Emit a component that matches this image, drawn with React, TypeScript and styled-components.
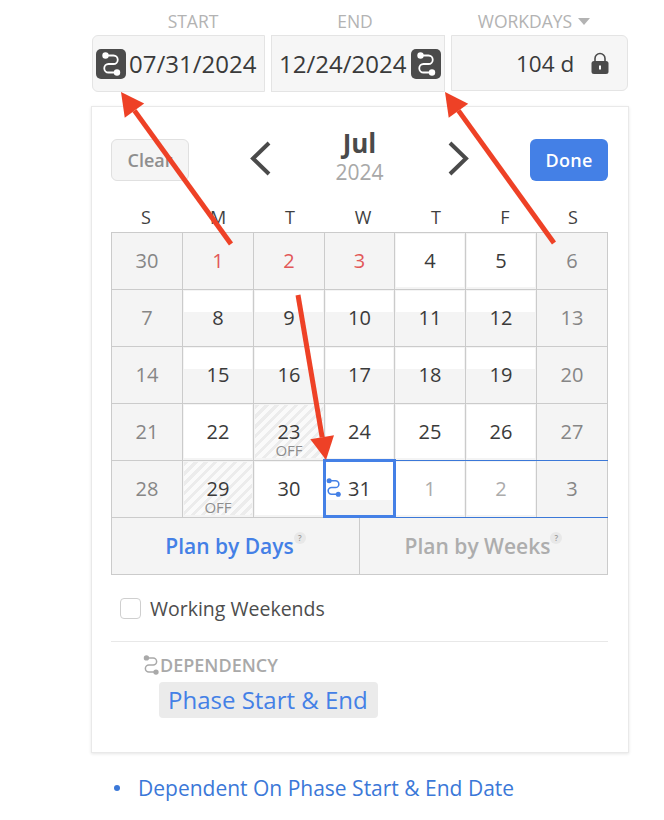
import React from 'react'
import styled, { createGlobalStyle } from 'styled-components'

const GlobalStyle = createGlobalStyle`
  html, body {
    margin: 0;
    padding: 0;
    background: #fff;
    font-family: 'Open Sans', 'Noto Sans', sans-serif;
    color: #3b3b3b;
  }
`

const Page = styled.div`
  position: relative;
  width: 664px;
  height: 820px;
  overflow: hidden;
  box-sizing: border-box;
  padding: 9px 0 0 91px;
`

const FieldLabels = styled.div`
  display: grid;
  grid-template-columns: 174px 180px 178px;
  width: 538px;
  height: 26px;
  align-items: start;
`

const FieldLabel = styled.div<{ $inset?: number }>`
  font-size: 17.5px;
  line-height: 24px;
  color: #b3b3b3;
  padding-left: ${p => p.$inset ?? 0}px;
  display: flex;
  align-items: center;
  justify-content: center;
  gap: 6px;
`

const Caret = styled.span`
  width: 0;
  height: 0;
  border-left: 6px solid transparent;
  border-right: 6px solid transparent;
  border-top: 7px solid #b3b3b3;
`

const Fields = styled.div`
  display: flex;
  gap: 6px;
  padding-left: 1px;
  height: 57px;
`

const Field = styled.div<{ $w: number; $radius: string; $h?: number; $pad?: number; $size?: number }>`
  box-sizing: border-box;
  width: ${p => p.$w}px;
  height: ${p => p.$h ?? 57}px;
  padding-left: ${p => p.$pad ?? 0}px;
  background: #f6f6f6;
  border: 1px solid #e4e4e4;
  border-radius: ${p => p.$radius};
  display: flex;
  align-items: center;
  font-size: ${p => p.$size ?? 24}px;
  color: #3a3a3a;
  white-space: nowrap;
`

const DepBadge = styled.span<{ $end?: boolean }>`
  flex: none;
  width: 30px;
  height: 30px;
  border-radius: 5px;
  background: #4b4b4b;
  display: flex;
  align-items: center;
  justify-content: center;
  margin: ${p => (p.$end ? '0 0 0 5px' : '0 3px 0 3px')};
`

const LockSlot = styled.span`
  display: flex;
  margin-left: 16px;
`

const Panel = styled.div`
  box-sizing: border-box;
  width: 538px;
  height: 647px;
  margin-top: 14px;
  background: #fff;
  border: 1px solid #e9e9e9;
  box-shadow: 0 1px 3px rgba(0, 0, 0, 0.1);
  padding: 32px 20px 0 19px;
`

const PanelHead = styled.div`
  display: flex;
  align-items: flex-start;
  height: 68px;
`

const ClearButton = styled.button`
  box-sizing: border-box;
  width: 78px;
  height: 42px;
  padding: 0;
  border: 1px solid #e0e0e0;
  border-radius: 6px;
  background: #f5f5f5;
  color: #8e8e8e;
  font: 600 18px 'Open Sans', sans-serif;
`

const DoneButton = styled.button`
  box-sizing: border-box;
  width: 78px;
  height: 42px;
  padding: 0;
  border: 0;
  border-radius: 6px;
  background: #4480e6;
  color: #fff;
  font: 600 18px 'Open Sans', sans-serif;
  letter-spacing: 0.3px;
`

const MonthNav = styled.div`
  flex: 1;
  display: flex;
  justify-content: space-between;
  align-items: flex-start;
  padding: 1px 60px 0 60px;
`

const Chevron = styled.svg`
  display: block;
  margin-top: 1px;
`

const MonthTitle = styled.div`
  text-align: center;
  margin-top: -13px;
`

const MonthName = styled.div`
  font-size: 26px;
  line-height: 32px;
  font-weight: 700;
  color: #4a4a4a;
`

const YearName = styled.div`
  font-size: 21px;
  line-height: 27px;
  color: #a8a8a8;
`

const Weekdays = styled.div`
  display: grid;
  grid-template-columns: 70px 74px 70px 76px 70px 68px 68px;
  height: 25px;
`

const Weekday = styled.div`
  text-align: center;
  font-size: 18px;
  line-height: 20px;
  font-weight: 500;
  color: #3f3f3f;
`

const Grid = styled.div`
  position: relative;
  display: grid;
  grid-template-columns: 71px 71px 71px 70px 71px 71px 71px;
  grid-auto-rows: 57px;
  width: 497px;
  box-sizing: border-box;
  border-top: 1px solid #cbcbcb;
  border-left: 1px solid #cbcbcb;
`

type FillKind = 'none' | 'full' | 'band' | 'tall' | 'off'

const fills: Record<FillKind, string> = {
  none: 'none',
  full: 'linear-gradient(#fff, #fff) 1px 1px / calc(100% - 2px) calc(100% - 3px) no-repeat',
  band: 'linear-gradient(#fff, #fff) 1px 1px / calc(100% - 2px) 21px no-repeat',
  tall: 'linear-gradient(#fff, #fff) 1px 1px / calc(100% - 2px) 38px no-repeat',
  off: 'repeating-linear-gradient(135deg, #ececec 0 3px, #fafafa 3px 7px) 1px 1px / calc(100% - 2px) calc(100% - 3px) no-repeat'
}

const Cell = styled.div<{ $fill: FillKind }>`
  box-sizing: border-box;
  position: relative;
  display: flex;
  flex-direction: column;
  align-items: center;
  justify-content: center;
  background: ${p => fills[p.$fill]}, #f4f4f4;
  border-right: 1px solid #cbcbcb;
  border-bottom: 1px solid #cbcbcb;
`

const tones = {
  dark: '#3a3a3a',
  muted: '#868686',
  faint: '#ababab',
  red: '#e25858'
}

const DayNumber = styled.span<{ $tone: keyof typeof tones }>`
  font-size: 20px;
  line-height: 26px;
  color: ${p => tones[p.$tone]};
`

const OffTag = styled.span`
  font-size: 15px;
  line-height: 12px;
  margin-top: -1px;
  margin-bottom: -11px;
  color: #8d8d8d;
`

const SelectedFrame = styled.div`
  position: absolute;
  z-index: 1;
  left: -2px;
  top: -2px;
  right: -2px;
  bottom: -1px;
  border: 3px solid #4480e6;
`

const SelectedIcon = styled.span`
  position: absolute;
  left: -1px;
  top: 17px;
  display: flex;
`

const NextMonthOutline = styled.div`
  position: absolute;
  left: 283px;
  right: 0;
  top: 227px;
  height: 58px;
  box-sizing: border-box;
  border-top: 1px solid #3b78d8;
  border-bottom: 1px solid #3b78d8;
  pointer-events: none;
`

const PlanTabs = styled.div`
  display: grid;
  grid-template-columns: 247px 1fr;
  width: 497px;
  height: 57px;
  box-sizing: border-box;
  border: 1px solid #cbcbcb;
  border-top: 0;
  background: #f4f4f4;
`

const PlanTab = styled.div<{ $active?: boolean }>`
  display: flex;
  align-items: center;
  justify-content: center;
  font-size: 21px;
  font-weight: 600;
  color: ${p => (p.$active ? '#4480e6' : '#adadad')};
  & + & {
    border-left: 1px solid #cbcbcb;
  }
`

const HelpMark = styled.span`
  width: 12px;
  height: 12px;
  border-radius: 50%;
  background: #e8e8e8;
  color: #999;
  font-size: 8px;
  line-height: 12px;
  font-weight: 600;
  text-align: center;
  margin: -16px 0 0 0;
`

const CheckRow = styled.label`
  display: flex;
  align-items: center;
  gap: 9px;
  height: 66px;
  padding: 0 0 0 9px;
  font-size: 19.5px;
  color: #4d4d4d;
`

const CheckBox = styled.span`
  box-sizing: border-box;
  width: 21px;
  height: 21px;
  border: 1px solid #cfcfcf;
  border-radius: 4px;
  background: #fff;
`

const Divider = styled.div`
  width: 497px;
  height: 1px;
  background: #e8e8e8;
`

const DependencySection = styled.div`
  padding: 11px 0 0 30px;
`

const DependencyLabel = styled.div`
  display: flex;
  align-items: center;
  height: 24px;
  font-size: 18px;
  font-weight: 600;
  color: #a9a9a9;
  svg {
    margin-right: -1px;
  }
`

const DependencyChip = styled.span`
  display: inline-block;
  margin: 5px 0 0 18px;
  padding: 0 10px 0 9px;
  height: 36px;
  line-height: 35px;
  border-radius: 4px;
  background: #ebebeb;
  color: #4480e6;
  font-size: 24px;
  white-space: nowrap;
`

const Notes = styled.ul`
  list-style: none;
  margin: 21px 0 0;
  padding: 0 0 0 23px;
  font-size: 21px;
  line-height: 28px;
  color: #3b78d8;
`

const NoteItem = styled.li`
  display: flex;
  align-items: center;
  gap: 18px;
  &::before {
    content: '';
    width: 6px;
    height: 6px;
    border-radius: 50%;
    background: #3b78d8;
  }
`

const Arrows = styled.svg`
  position: absolute;
  z-index: 2;
  left: 0;
  top: 0;
  pointer-events: none;
`

const LockIcon = () => (
  <svg width="20" height="24" viewBox="0 0 20 24">
    <path d="M5 11V7.5a5 5 0 0 1 10 0V11" fill="none" stroke="#4b4b4b" strokeWidth="1.6" />
    <rect x="1.5" y="10" width="17" height="13" rx="2.5" fill="#4b4b4b" />
    <rect x="9" y="14.5" width="2" height="4" fill="#fff" />
  </svg>
)

const DepIcon = ({ color, size, width = 1.8 }: { color: string; size: number; width?: number }) => (
  <svg width={size} height={size} viewBox="0 0 24 24" fill="none">
    <path
      d="M7 3.5h7.5a4.25 4.25 0 0 1 0 8.5h-5a4.25 4.25 0 0 0 0 8.5H18"
      stroke={color}
      strokeWidth={width}
      strokeLinecap="round"
    />
    <circle cx="6.5" cy="3.5" r="3.2" fill={color} />
    <circle cx="18" cy="20.5" r="3.2" fill={color} />
  </svg>
)

type Day = { n: number; fill: FillKind; tone: keyof typeof tones; off?: boolean; selected?: boolean }

const weekRow = (start: number): Day[] => [
  { n: start, fill: 'none', tone: 'muted' },
  ...[1, 2, 3, 4, 5].map(i => ({ n: start + i, fill: 'band' as FillKind, tone: 'dark' as const })),
  { n: start + 6, fill: 'none', tone: 'muted' }
]

const days: Day[] = [
  { n: 30, fill: 'none', tone: 'muted' },
  { n: 1, fill: 'none', tone: 'red' },
  { n: 2, fill: 'none', tone: 'red' },
  { n: 3, fill: 'none', tone: 'red' },
  { n: 4, fill: 'full', tone: 'dark' },
  { n: 5, fill: 'full', tone: 'dark' },
  { n: 6, fill: 'none', tone: 'muted' },
  ...weekRow(7),
  ...weekRow(14),
  { n: 21, fill: 'none', tone: 'muted' },
  { n: 22, fill: 'full', tone: 'dark' },
  { n: 23, fill: 'off', tone: 'dark', off: true },
  { n: 24, fill: 'full', tone: 'dark' },
  { n: 25, fill: 'full', tone: 'dark' },
  { n: 26, fill: 'full', tone: 'dark' },
  { n: 27, fill: 'none', tone: 'muted' },
  { n: 28, fill: 'none', tone: 'muted' },
  { n: 29, fill: 'off', tone: 'dark', off: true },
  { n: 30, fill: 'full', tone: 'dark' },
  { n: 31, fill: 'tall', tone: 'dark', selected: true },
  { n: 1, fill: 'full', tone: 'faint' },
  { n: 2, fill: 'full', tone: 'faint' },
  { n: 3, fill: 'none', tone: 'muted' }
]

const RedArrow = ({ x1, y1, x2, y2 }: { x1: number; y1: number; x2: number; y2: number }) => {
  const a = Math.atan2(y2 - y1, x2 - x1)
  const len = 23
  const half = 12
  const bx = x2 - len * Math.cos(a)
  const by = y2 - len * Math.sin(a)
  const nx = -Math.sin(a) * half
  const ny = Math.cos(a) * half
  return (
    <g fill="#ee4126" stroke="#ee4126">
      <line x1={x1} y1={y1} x2={bx} y2={by} strokeWidth="5" />
      <polygon points={`${x2},${y2} ${bx + nx},${by + ny} ${bx - nx},${by - ny}`} strokeWidth="0" />
    </g>
  )
}

export default function App() {
  return (
    <>
      <GlobalStyle />
      <Page>
        <FieldLabels>
          <FieldLabel $inset={30}>START</FieldLabel>
          <FieldLabel>END</FieldLabel>
          <FieldLabel>
            WORKDAYS <Caret />
          </FieldLabel>
        </FieldLabels>
        <Fields>
          <Field $w={173} $radius="6px 0 0 6px">
            <DepBadge>
              <DepIcon color="#fff" size={24} />
            </DepBadge>
            07/31/2024
          </Field>
          <Field $w={174} $radius="0" $pad={7}>
            12/24/2024
            <DepBadge $end>
              <DepIcon color="#fff" size={24} />
            </DepBadge>
          </Field>
          <Field $w={177} $h={56} $radius="0 6px 6px 0" $pad={64} $size={22.5}>
            104 d
            <LockSlot>
              <LockIcon />
            </LockSlot>
          </Field>
        </Fields>
        <Panel>
          <PanelHead>
            <ClearButton>Clear</ClearButton>
            <MonthNav>
              <Chevron width="24" height="36" viewBox="0 0 24 36" fill="none">
                <path d="M20 2 4 17.5 20 33" stroke="#4a4a4a" strokeWidth="4" />
              </Chevron>
              <MonthTitle>
                <MonthName>Jul</MonthName>
                <YearName>2024</YearName>
              </MonthTitle>
              <Chevron width="24" height="36" viewBox="0 0 24 36" fill="none">
                <path d="M4 2 20 17.5 4 33" stroke="#4a4a4a" strokeWidth="4" />
              </Chevron>
            </MonthNav>
            <DoneButton>Done</DoneButton>
          </PanelHead>
          <Weekdays>
            {['S', 'M', 'T', 'W', 'T', 'F', 'S'].map((d, i) => (
              <Weekday key={i}>{d}</Weekday>
            ))}
          </Weekdays>
          <Grid>
            {days.map((d, i) => (
              <Cell key={i} $fill={d.fill}>
                <DayNumber $tone={d.tone}>{d.n}</DayNumber>
                {d.off && <OffTag>OFF</OffTag>}
                {d.selected && (
                  <>
                    <SelectedFrame />
                    <SelectedIcon>
                      <DepIcon color="#4480e6" size={19} width={2} />
                    </SelectedIcon>
                  </>
                )}
              </Cell>
            ))}
            <NextMonthOutline />
          </Grid>
          <PlanTabs>
            <PlanTab $active>
              Plan by Days<HelpMark>?</HelpMark>
            </PlanTab>
            <PlanTab>
              Plan by Weeks<HelpMark>?</HelpMark>
            </PlanTab>
          </PlanTabs>
          <CheckRow>
            <CheckBox />
            Working Weekends
          </CheckRow>
          <Divider />
          <DependencySection>
            <DependencyLabel>
              <DepIcon color="#a9a9a9" size={20} />
              DEPENDENCY
            </DependencyLabel>
            <DependencyChip>Phase Start &amp; End</DependencyChip>
          </DependencySection>
        </Panel>
        <Notes>
          <NoteItem>Dependent On Phase Start &amp; End Date</NoteItem>
        </Notes>
        <Arrows width="664" height="820" viewBox="0 0 664 820">
          <RedArrow x1={231} y1={244} x2={121} y2={92} />
          <RedArrow x1={554} y1={243} x2={445} y2={92} />
          <RedArrow x1={298} y1={295} x2={326} y2={460} />
        </Arrows>
      </Page>
    </>
  )
}
